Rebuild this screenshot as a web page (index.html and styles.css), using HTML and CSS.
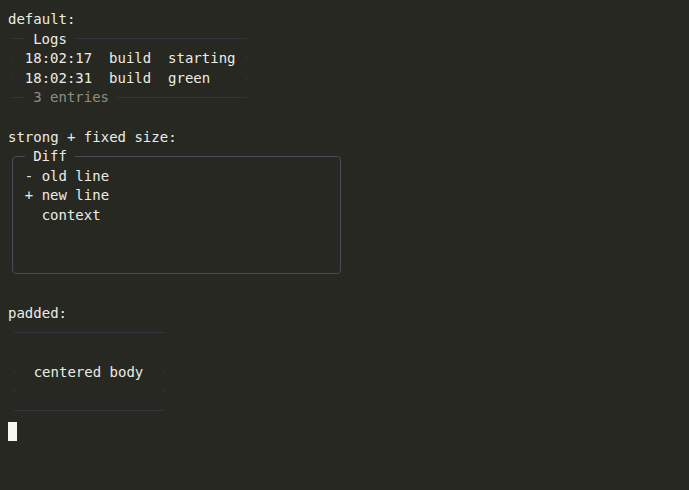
FILE: index.html
```html
<!DOCTYPE html>
<html>
<head>
<meta charset="utf-8">
<link rel="stylesheet" href="styles.css">
</head>
<body>
<div class="screen">
  <div class="line">default:</div>
  <div class="box logs">
    <div class="edge"><i class="seg lead"></i><span class="label">Logs</span><i class="seg fill"></i></div>
    <div class="sides logs-body">
      <div class="line">18:02:17  build  starting</div>
      <div class="line">18:02:31  build  green</div>
    </div>
    <div class="edge"><i class="seg lead"></i><span class="label dim">3 entries</span><i class="seg fill"></i></div>
  </div>
  <div class="line"> </div>
  <div class="line">strong + fixed size:</div>
  <fieldset class="diff">
    <legend>Diff</legend>
    <div class="diff-body">
      <div class="line">- old line</div>
      <div class="line">+ new line</div>
      <div class="line">  context</div>
    </div>
  </fieldset>
  <div class="line"> </div>
  <div class="line">padded:</div>
  <div class="box padded">
    <div class="edge"><i class="seg fill"></i></div>
    <div class="sides padded-body">
      <div class="line"> </div>
      <div class="line">centered body</div>
      <div class="line"> </div>
    </div>
    <div class="edge"><i class="seg fill"></i></div>
  </div>
  <div class="line"><span class="cursor"></span></div>
</div>
</body>
</html>
```

FILE: styles.css
```css
html, body {
  margin: 0;
  padding: 0;
  background: #272822;
}

.screen {
  padding: 10px 8px 0;
  font-family: "DejaVu Sans Mono", "Liberation Mono", monospace;
  font-size: 14px;
  line-height: 19.6px;
  color: #ecece6;
  --faint: #34343d;
  --strong: #4a4a56;
}

.line {
  height: 19.6px;
  white-space: pre;
}

.box {
  margin-left: 4.2px;
}

.logs {
  width: 235.2px;
}

.edge {
  display: flex;
  height: 19.6px;
}

.seg {
  display: block;
  height: 1px;
  margin-top: 8.3px;
  background: var(--faint);
}

.lead {
  width: 12.6px;
}

.fill {
  flex: 1;
}

.label {
  padding: 0 8.4px;
  white-space: pre;
}

.dim {
  color: #8d8d88;
}

.sides {
  background-image:
    repeating-linear-gradient(to bottom, transparent 0 8px, var(--faint) 8px 10px, transparent 10px 19.6px),
    repeating-linear-gradient(to bottom, transparent 0 8px, var(--faint) 8px 10px, transparent 10px 19.6px);
  background-size: 1px 100%, 1px 100%;
  background-position: left top, right top;
  background-repeat: no-repeat;
}

.logs-body {
  padding-left: 12.6px;
}

.diff {
  box-sizing: border-box;
  width: 328.6px;
  margin: 0 0 10.3px 4.2px;
  padding: 0 0 8.3px 11.6px;
  border: 1px solid var(--strong);
  border-radius: 4px;
  min-width: 0;
}

.diff legend {
  padding: 0 8.4px;
  margin-left: 0;
  line-height: 19.6px;
}

.diff-body {
  height: 98px;
}

.padded {
  margin-left: 5.5px;
  width: 150px;
}

.padded-body {
  padding-left: 20.2px;
}

.cursor {
  display: inline-block;
  width: 8.6px;
  height: 19.4px;
  vertical-align: top;
  background: #f8f8f2;
}
```
